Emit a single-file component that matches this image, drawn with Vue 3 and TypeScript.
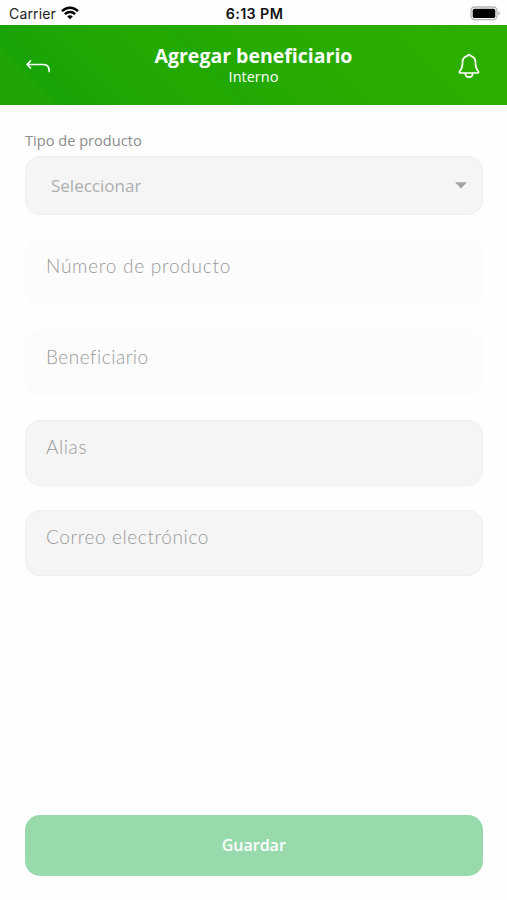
<script setup lang="ts">
import { ref } from 'vue'

interface Field {
  id: string
  label: string
  disabled: boolean
  spacing: string
}

const title = ref('Agregar beneficiario')
const subtitle = ref('Interno')

const fields: Field[] = [
  { id: 'numero', label: 'Número de producto', disabled: true, spacing: '0.75px' },
  { id: 'beneficiario', label: 'Beneficiario', disabled: true, spacing: '0.5px' },
  { id: 'alias', label: 'Alias', disabled: false, spacing: '0.6px' },
  { id: 'correo', label: 'Correo electrónico', disabled: false, spacing: '0.6px' },
]
</script>

<template>
  <div class="screen">
    <div class="status">
      <div class="carrier">
        <span>Carrier</span>
        <svg class="wifi" width="18" height="14" viewBox="0 0 18 14" fill="none" stroke="#000" stroke-width="2.5">
          <path d="M1 5.1C5.500.5 12.500.5 17 5.100" />
          <path d="M3.900 8.100C6.800 5.300 11.200 5.300 14.100 8.100" />
          <path d="M6.200 10.400C7.800 8.900 10.200 8.900 11.800 10.400L9 13.200Z" fill="#000" stroke="none" />
        </svg>
      </div>
      <span class="clock">6:13 PM</span>
      <svg class="battery" width="31" height="15" viewBox="0 0 31 15">
        <rect x="1" y="1" width="26" height="12.600" rx="3.600" fill="#fff" stroke="#b4b4b4" stroke-width="1.300" />
        <rect x="2.700" y="2.700" width="22.600" height="9.200" rx="1.700" fill="#000" />
        <path d="M28.500 5.200v4.200c2-.9 2-3.300 0-4.200Z" fill="#aaa" />
      </svg>
    </div>

    <header class="header">
      <button class="icon-button back" type="button" aria-label="Volver">
        <svg width="26" height="16" viewBox="0 0 26 16" fill="none" stroke="#fff" stroke-width="1.700" stroke-linecap="round" stroke-linejoin="round">
          <path d="M5.500 2 2 5.500 5.500 9M2 5.500H18.500C22.500 5.500 24.300 8 24.300 12.500" />
        </svg>
      </button>
      <div class="heading">
        <h1>{{ title }}</h1>
        <p>{{ subtitle }}</p>
      </div>
      <button class="icon-button bell" type="button" aria-label="Notificaciones">
        <svg width="22" height="26" viewBox="0 0 22 26" fill="none" stroke="#fff" stroke-width="1.700" stroke-linecap="round" stroke-linejoin="round">
          <path d="M9.600 2.800C9.600 1.100 12.400 1.100 12.400 2.800C16 3.500 17.500 6.300 17.500 9.500C17.500 14.500 18.300 16.500 20.300 18.200C21 19 20.600 20 19.500 20H2.500C1.400 20 1 19 1.700 18.200C3.700 16.500 4.500 14.500 4.500 9.500C4.500 6.300 6 3.500 9.600 2.800Z" />
          <path d="M7.300 20.300C7.300 25.400 14.700 25.400 14.700 20.300" />
        </svg>
      </button>
    </header>

    <main class="form">
      <span class="caption">Tipo de producto</span>
      <div class="select" role="combobox" aria-expanded="false">
        <span>Seleccionar</span>
        <svg width="12" height="7" viewBox="0 0 12 7"><path d="M0 .3h12L6 6.600Z" fill="#a3a3a3" /></svg>
      </div>
      <div v-for="field in fields" :key="field.id" class="field" :class="{ disabled: field.disabled }">
        <span :style="{ letterSpacing: field.spacing }">{{ field.label }}</span>
      </div>
      <button class="save" type="button" disabled>Guardar</button>
    </main>
  </div>
</template>

<style>
body {
  background: #fff;
}
</style>

<style scoped>
.screen {
  box-sizing: border-box;
  width: 100%;
  height: 900px;
  display: flex;
  flex-direction: column;
  background: #fefefe;
  font-family: 'Open Sans', sans-serif;
  overflow: hidden;
}
.status {
  height: 25px;
  flex: none;
  display: grid;
  grid-template-columns: 1fr auto 1fr;
  align-items: center;
  padding: 2px 6px 0 9px;
  box-sizing: border-box;
  font: 400 14px/20px Inter, sans-serif;
  letter-spacing: 0.150px;
  color: #222;
}
.carrier {
  display: flex;
  align-items: center;
  gap: 5px;
}
.wifi {
  margin-top: -2px;
}
.clock {
  font-weight: 600;
  font-size: 14.300px;
  letter-spacing: 0.400px;
  margin-left: -1px;
  color: #111;
}
.battery {
  justify-self: end;
}
.header {
  height: 79.500px;
  flex: none;
  box-sizing: border-box;
  display: grid;
  grid-template-columns: 40px 1fr 40px;
  align-items: center;
  padding: 2px 18px 0;
  color: #fff;
  background: linear-gradient(
    45deg,
    #20a606 0,
    #1ea506 42px,
    #17a305 43px,
    #1fa704 95px,
    #25aa02 165px,
    #20a803 170px,
    #27ab02 225px,
    #2cad01 310px,
    #2daf00 100%
  );
}
.icon-button {
  display: flex;
  justify-content: center;
  padding: 0;
  border: 0;
  background: none;
}
.back {
  padding-top: 3px;
}
.heading {
  text-align: center;
}
h1 {
  margin: 0;
  font-size: 19.500px;
  line-height: 22px;
  font-weight: 700;
}
p {
  margin: 0;
  font-size: 14.500px;
  line-height: 20px;
}
.form {
  flex: 1;
  min-height: 0;
  display: flex;
  flex-direction: column;
  padding: 25px 24.500px 24.500px 25px;
}
.caption {
  font-size: 14.600px;
  line-height: 20px;
  color: #8c8c8c;
  margin-bottom: 6.500px;
}
.select,
.field {
  flex: none;
  box-sizing: border-box;
  border: 1.500px solid #eee;
  border-radius: 15px;
  background: #f5f5f5;
  color: #adadad;
}
.select {
  height: 59px;
  display: flex;
  align-items: center;
  justify-content: space-between;
  padding: 0 15px 0 25px;
  font-size: 17px;
}
.field {
  height: 66px;
  margin-top: 24.300px;
  padding: 14px 20px;
  font: 300 19px/24px Lato, sans-serif;
  color: #999;
}
.field.disabled {
  background: #fcfcfc;
  border-color: #fcfcfc;
}
.save {
  height: 61px;
  margin-top: auto;
  border: 0;
  border-radius: 15px;
  background: #99daad;
  color: #fff;
  font: 600 16px/22px 'Open Sans', sans-serif;
}
</style>
